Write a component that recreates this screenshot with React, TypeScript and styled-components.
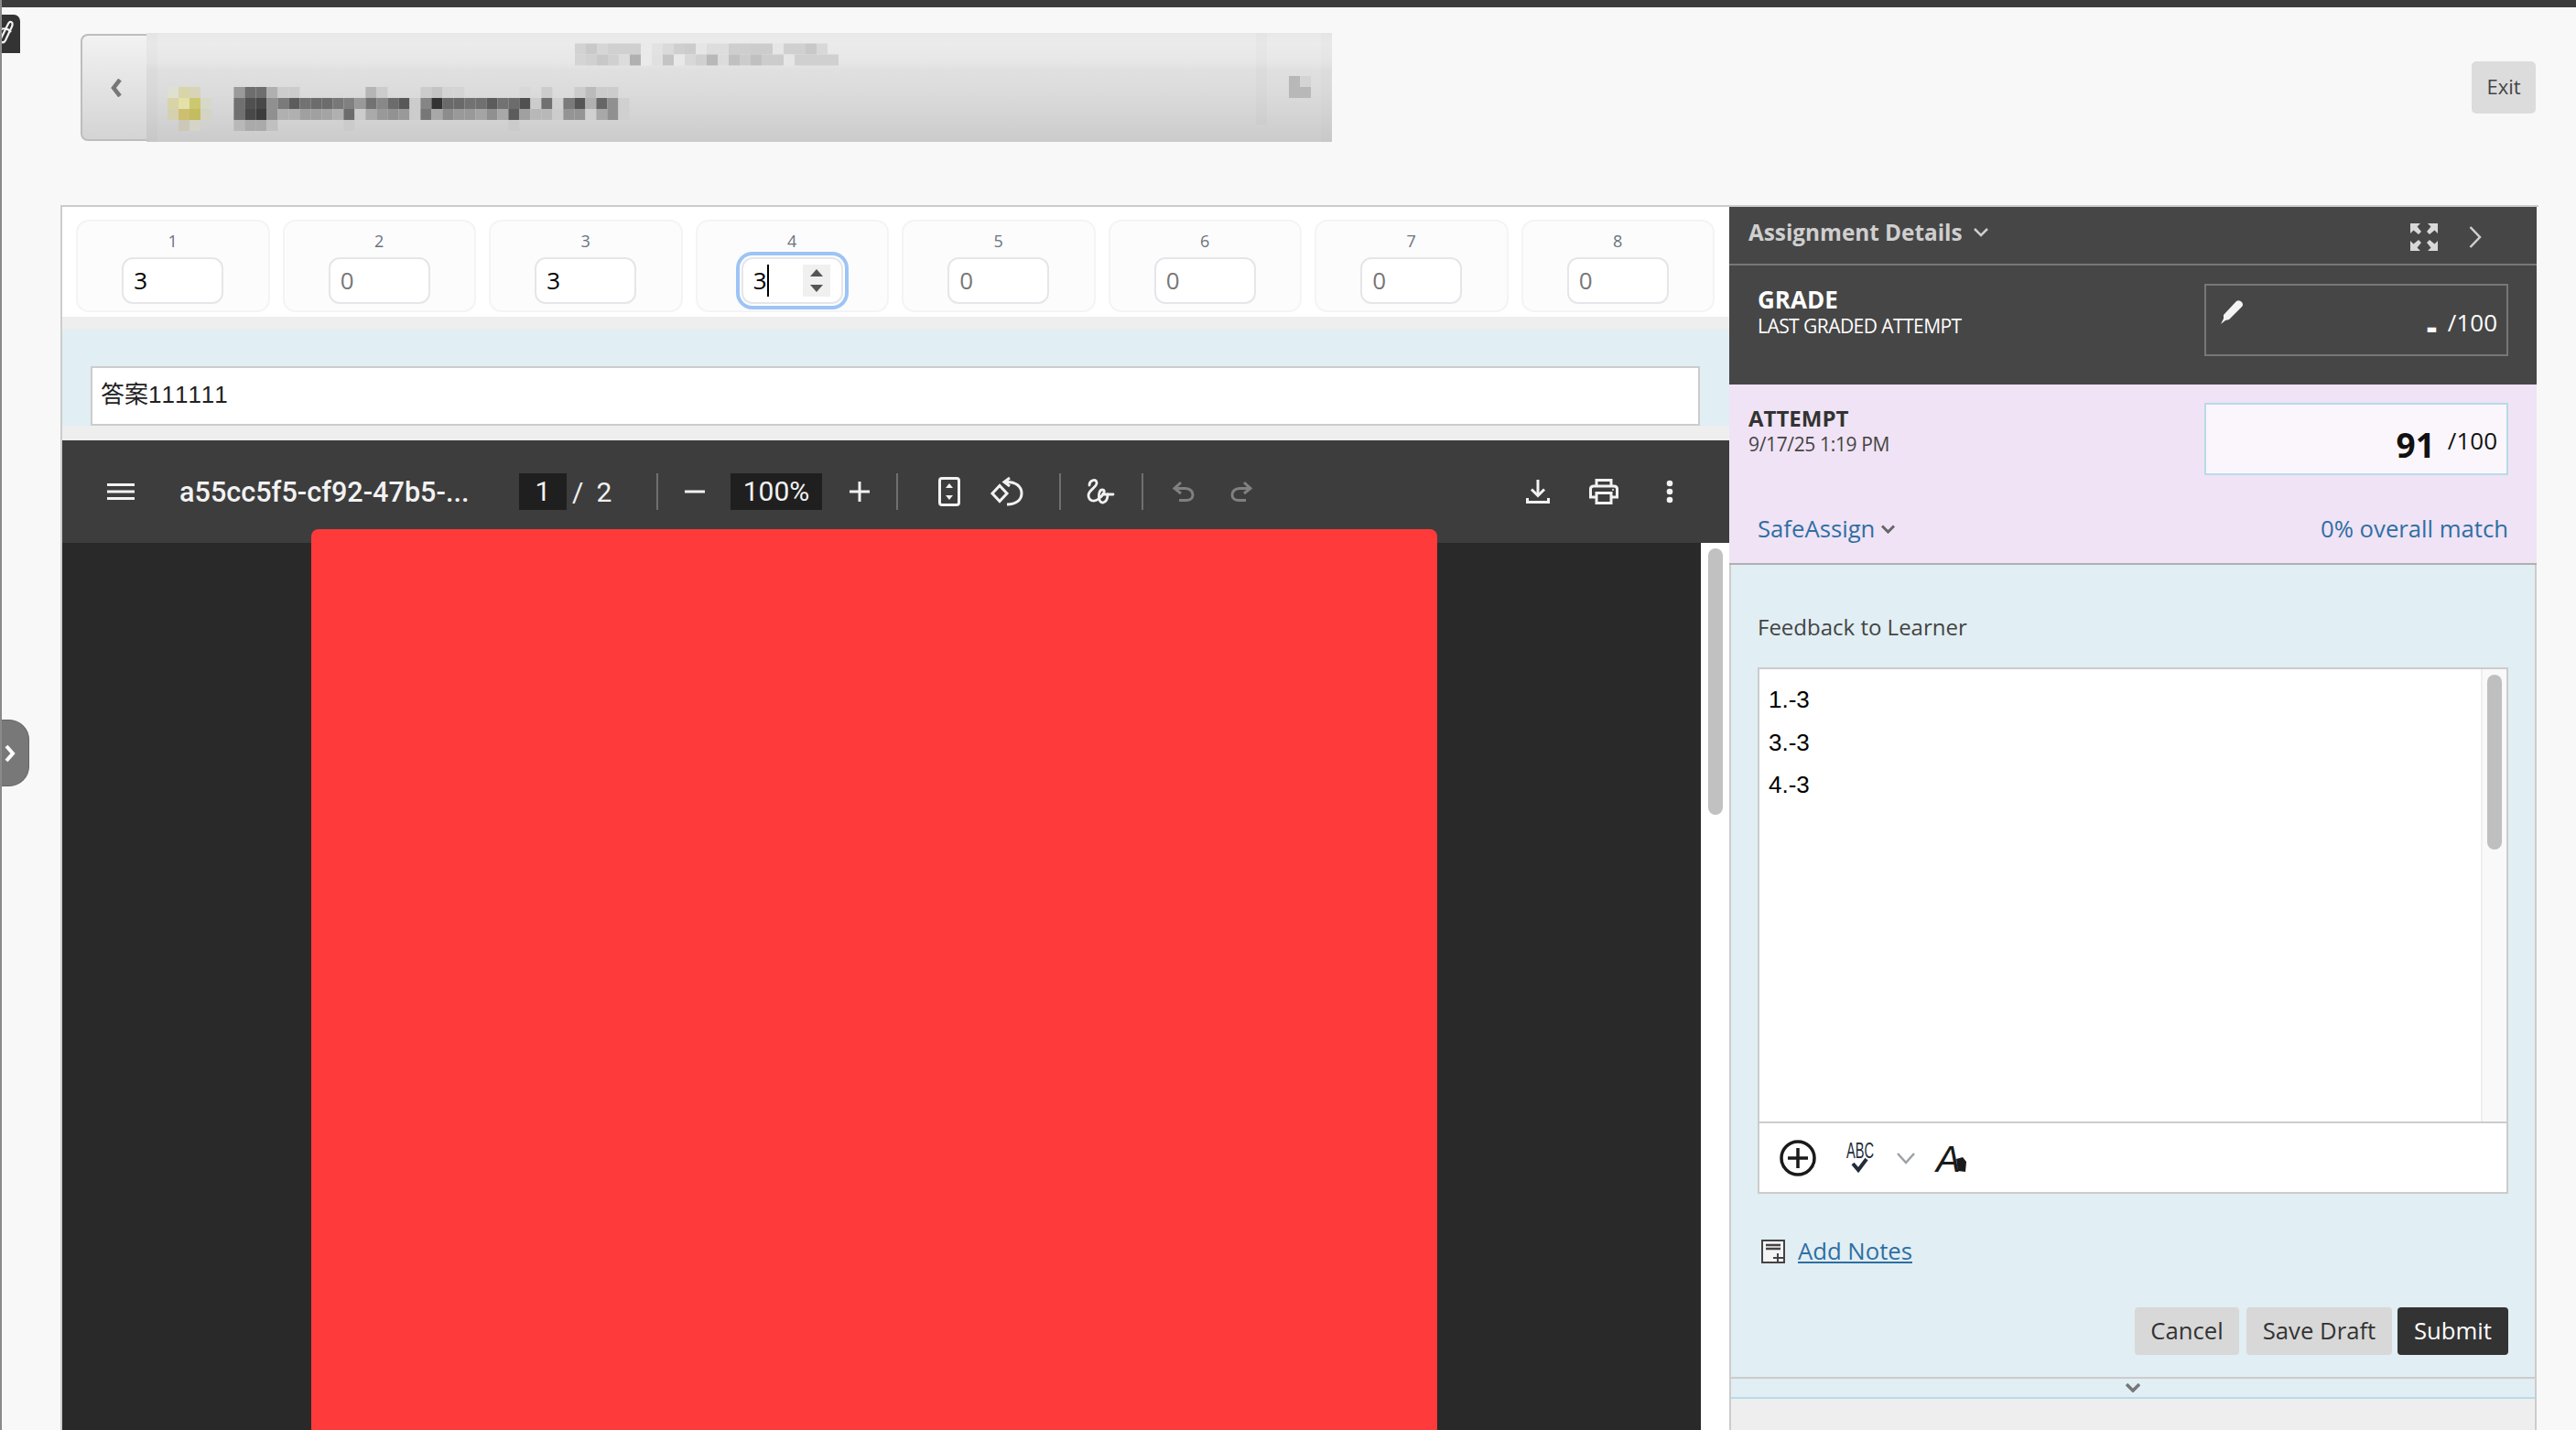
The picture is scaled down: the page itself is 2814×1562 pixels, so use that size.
import React from 'react';
import styled, { createGlobalStyle } from 'styled-components';

const GlobalStyle = createGlobalStyle`
  html, body { margin: 0; padding: 0; background: #f8f8f8; }
  body { font-family: "Open Sans", "Noto Sans", sans-serif; }
  * { box-sizing: border-box; }
`;

const Page = styled.div`
  position: relative;
  width: 2814px;
  height: 1562px;
  overflow: hidden;
  background: #f8f8f8;
  border-left: 2px solid #8a8a8a;
  display: flex;
  flex-direction: column;
`;
const TopBar = styled.div`
  height: 8px;
  margin-left: -2px;
  background: #3c3c3c;
  flex: none;
`;
const CornerTag = styled.div`
  position: absolute;
  left: -2px;
  top: 16px;
  width: 22px;
  height: 42px;
  background: #333;
  border-top-right-radius: 7px;
  padding-top: 6px;
  line-height: 0;
`;
const SideTab = styled.div`
  position: absolute;
  left: -2px;
  top: 786px;
  width: 32px;
  height: 73px;
  background: #787878;
  border: 1px solid #666;
  border-left: none;
  border-radius: 0 22px 22px 0;
  display: flex;
  align-items: center;
  padding-left: 5px;
`;
const HeaderRow = styled.header`
  height: 216px;
  flex: none;
  display: flex;
  align-items: flex-start;
  padding-left: 86px;
  padding-top: 28px;
`;
const BackButton = styled.div`
  width: 72px;
  height: 117px;
  margin-top: 1px;
  background: linear-gradient(#f2f2f2, #d4d4d4);
  border: 2px solid #bdbdbd;
  border-right: none;
  border-radius: 8px 0 0 8px;
  display: flex;
  align-items: center;
  justify-content: center;
  padding: 0 0 0 4px;
`;
const BlurBanner = styled.div`
  width: 1295px;
  height: 119px;
  background: linear-gradient(#e8e8e8 0, #ebebeb 12px, #e7e7e7 32px, #e0e0e0 40px, #dcdcdc 62px, #d4d4d4 90px, #cbcbcb 119px);
  line-height: 0;
`;
const ExitButton = styled.button`
  width: 70px;
  height: 57px;
  margin: 31px 44px 0 auto;
  border: none;
  border-radius: 5px;
  background: #dcdcdc;
  color: #444;
  font: 400 22px "Open Sans", sans-serif;
  padding: 0 0 3px;
`;
const Main = styled.main`
  flex: 1;
  display: flex;
  margin-left: 64px;
  min-height: 0;
  border-top: 2px solid #ccc;
  width: 2707px;
`;
const LeftColumn = styled.section`
  width: 1823px;
  flex: none;
  display: flex;
  flex-direction: column;
  background: #eee;
  border-left: 2px solid #ccc;
`;
const RubricStrip = styled.div`
  height: 120px;
  flex: none;
  background: #fff;
  padding: 14px 16px 0 15px;
  display: grid;
  grid-template-columns: repeat(8, 1fr);
  grid-template-rows: 101px;
  column-gap: 14px;
`;
const RubricCell = styled.div`
  background: #fcfcfc;
  border: 2px solid #f4f4f4;
  border-radius: 14px;
  display: flex;
  flex-direction: column;
  align-items: center;
  padding-top: 5px;
`;
const RubricLabel = styled.div`
  height: 32px;
  margin-bottom: 2px;
  line-height: 32px;
  font-size: 18px;
  color: #6b7280;
`;
const ScoreBox = styled.div<{ $focused?: boolean; $filled?: boolean }>`
  position: relative;
  width: 111px;
  height: 51px;
  background: #fff;
  border: 2px solid #e6e6ea;
  border-radius: 12px;
  padding-left: 11px;
  font-size: 26px;
  line-height: 47px;
  color: ${p => (p.$filled ? '#000' : '#777')};
  box-shadow: ${p => (p.$focused ? '0 0 0 2px #fff, 0 0 0 6px #9cc4f5' : 'none')};
`;
const Caret = styled.span`
  position: absolute;
  left: 26px;
  top: 6px;
  width: 2px;
  height: 35px;
  background: #000;
`;
const Spinner = styled.span`
  position: absolute;
  right: 12px;
  top: 6px;
  width: 30px;
  height: 35px;
  background: #f0f0f0;
  display: flex;
  flex-direction: column;
  align-items: center;
  justify-content: center;
  gap: 9px;
`;
const SpinUp = styled.i`
  width: 0;
  height: 0;
  border-left: 7px solid transparent;
  border-right: 7px solid transparent;
  border-bottom: 8px solid #555;
`;
const SpinDown = styled.i`
  width: 0;
  height: 0;
  border-left: 7px solid transparent;
  border-right: 7px solid transparent;
  border-top: 8px solid #555;
`;
const AnswerBand = styled.div`
  height: 105px;
  flex: none;
  margin-top: 14px;
  background: #e1eef3;
  padding: 40px 32px 0 31px;
`;
const AnswerInput = styled.div`
  height: 65px;
  background: #fff;
  border: 2px solid #ccc;
  padding-left: 9px;
  font: 400 26px/58px "Liberation Sans", "Noto Sans CJK SC", sans-serif;
  font-kerning: none;
  color: #222;
`;
const ViewerBar = styled.div`
  height: 112px;
  flex: none;
  margin-top: 16px;
  background: #3d3d3d;
  display: flex;
  align-items: center;
  padding-right: 61px;
  color: #f2f2f2;
  font-family: Roboto, "Liberation Sans", sans-serif;
  font-size: 30px;
`;
const ToolIcon = styled.svg<{ $ml: number }>`
  flex: none;
  margin-left: ${p => p.$ml}px;
  display: block;
  overflow: visible;
`;
const FileName = styled.div`
  width: 317px;
  margin-left: 49px;
  white-space: nowrap;
  font-size: 30.6px;
  font-weight: 500;
`;
const PageBox = styled.div`
  width: 52px;
  height: 40px;
  margin-left: 54px;
  background: #1f1f1f;
  text-align: center;
  line-height: 40px;
`;
const PageTotal = styled.div`
  width: 98px;
  padding-left: 6px;
  display: flex;
  gap: 14px;
`;
const BarSep = styled.div<{ $ml?: number }>`
  width: 2px;
  height: 40px;
  margin-left: ${p => p.$ml ?? 0}px;
  background: #6f6f6f;
  flex: none;
`;
const ZoomBox = styled.div`
  width: 100px;
  height: 40px;
  margin-left: 28px;
  background: #1f1f1f;
  text-align: center;
  line-height: 40px;
`;
const RightTools = styled.div`
  margin-left: auto;
  display: flex;
  align-items: center;
`;
const ViewerBody = styled.div`
  flex: 1;
  min-height: 0;
  display: flex;
  background: #292929;
`;
const PdfArea = styled.div`
  flex: 1;
  padding-left: 272px;
`;
const PdfPage = styled.div`
  width: 1230px;
  height: 1200px;
  margin-top: -15px;
  background: #ff3a3a;
  border-radius: 8px 8px 0 0;
`;
const ViewerTrack = styled.div`
  width: 31px;
  flex: none;
  background: #fff;
  padding: 6px 0 0 8px;
`;
const ViewerThumb = styled.div`
  width: 16px;
  height: 291px;
  border-radius: 8px;
  background: #c1c1c1;
`;
const Panel = styled.aside`
  width: 882px;
  flex: none;
  display: flex;
  flex-direction: column;
`;
const PanelHeader = styled.div`
  height: 64px;
  flex: none;
  background: #464646;
  border-bottom: 2px solid #777;
  display: flex;
  align-items: center;
  padding: 0 0 7px 21px;
  color: #cfcfcf;
  font-size: 24.3px;
  font-weight: 700;
`;
const PanelTitle = styled.span`
  margin-right: 12px;
`;
const HeaderTools = styled.div`
  margin-left: auto;
  padding-right: 60px;
  padding-top: 10px;
  display: flex;
  align-items: center;
  gap: 34px;
`;
const GradeSection = styled.div`
  height: 130px;
  flex: none;
  background: #464646;
  padding: 20px 31px 0 31px;
  display: flex;
  justify-content: space-between;
  color: #fff;
`;
const StackTitle = styled.div`
  font-size: 26px;
  font-weight: 700;
  line-height: 34px;
`;
const StackSub = styled.div`
  font-size: 21px;
  line-height: 24px;
  letter-spacing: -0.55px;
`;
const GradeBox = styled.div<{ $light?: boolean }>`
  width: 332px;
  height: 79px;
  border: 2px solid ${p => (p.$light ? '#b7dbe8' : '#777')};
  background: ${p => (p.$light ? '#fbf6fc' : 'transparent')};
  display: flex;
  align-items: center;
  justify-content: flex-end;
  padding-right: 10px;
  position: relative;
  color: ${p => (p.$light ? '#111' : '#fff')};
`;
const PencilSlot = styled.div`
  position: absolute;
  left: 16px;
  top: 16px;
  line-height: 0;
`;
const NoGrade = styled.span`
  font-size: 34px;
  font-weight: 800;
  line-height: 40px;
  margin-right: 12px;
  padding-top: 12px;
`;
const BigGrade = styled.span`
  font-size: 37px;
  font-weight: 700;
  line-height: 40px;
  margin-right: 14px;
  padding-top: 12px;
`;
const OutOf = styled.span<{ $drop?: number }>`
  font-size: 26px;
  line-height: 34px;
  padding-top: ${p => p.$drop ?? 0}px;
`;
const AttemptSection = styled.div`
  height: 197px;
  flex: none;
  background: #f0e3f5;
  border-bottom: 2px solid #b0b0b0;
  padding: 20px 31px 0 21px;
`;
const AttemptTop = styled.div`
  display: flex;
  justify-content: space-between;
  color: #333;
`;
const AttemptTitle = styled.div`
  font-size: 24px;
  font-weight: 700;
  line-height: 33px;
`;
const AttemptDate = styled.div`
  font-size: 21px;
  line-height: 24px;
  color: #444;
  letter-spacing: -0.35px;
`;
const SafeRow = styled.div`
  margin: 42px 0 0 10px;
  height: 34px;
  display: flex;
  align-items: center;
  justify-content: space-between;
  color: #2f6fa3;
  font-size: 25.7px;
  line-height: 34px;
`;
const SafeLink = styled.span`
  display: flex;
  align-items: center;
  gap: 7px;
`;
const LowerArea = styled.div`
  flex: 1;
  min-height: 0;
  background: #eee;
  display: flex;
  flex-direction: column;
  border-left: 2px solid #ccc;
  border-right: 2px solid #ccc;
`;
const FeedbackSection = styled.div`
  height: 887px;
  flex: none;
  background: #e1eef3;
  padding: 51px 29px 24px;
`;
const FeedbackLabel = styled.div`
  font-size: 24px;
  line-height: 34px;
  color: #444;
`;
const Editor = styled.div`
  margin-top: 27px;
  height: 575px;
  background: #fff;
  border: 2px solid #ccc;
  display: flex;
  flex-direction: column;
`;
const EditorBody = styled.div`
  height: 494px;
  flex: none;
  display: flex;
`;
const EditorText = styled.div`
  flex: 1;
  padding: 10px 0 0 10px;
  font: 400 26px/46.5px "Liberation Sans", Arial, sans-serif;
  color: #000;
`;
const EditorTrack = styled.div`
  width: 28px;
  flex: none;
  background: #f9f9f9;
  border-left: 2px solid #eee;
  padding: 6px 0 0 5px;
`;
const EditorThumb = styled.div`
  width: 16px;
  height: 191px;
  border-radius: 8px;
  background: #bfbfbf;
`;
const EditorTools = styled.div`
  flex: 1;
  border-top: 2px solid #ccc;
  display: flex;
  align-items: center;
`;
const NotesRow = styled.div`
  margin-top: 46px;
  height: 34px;
  display: flex;
  align-items: center;
`;
const NotesLink = styled.a`
  margin-left: 14px;
  color: #2f6fa3;
  font-size: 25.7px;
  line-height: 34px;
  text-decoration: underline;
`;
const ActionRow = styled.div`
  margin-top: 44px;
  height: 52px;
  display: flex;
  justify-content: flex-end;
`;
const ActionButton = styled.button<{ $w: number; $ml?: number; $primary?: boolean }>`
  width: ${p => p.$w}px;
  margin-left: ${p => p.$ml ?? 0}px;
  height: 52px;
  border: none;
  border-radius: 4px;
  padding: 0 0 2px;
  background: ${p => (p.$primary ? '#333' : '#d8d8d8')};
  color: ${p => (p.$primary ? '#fff' : '#333')};
  font: 400 25.7px "Open Sans", sans-serif;
`;
const CollapseStrip = styled.div`
  height: 24px;
  flex: none;
  background: #e1eef3;
  border-top: 2px solid #ccc;
  border-bottom: 2px solid #b7dbe8;
  display: flex;
  align-items: center;
  justify-content: center;
`;

const gray = (v: string) => `#${v}${v}${v}`;
const textRows: { y: number; x: number; cells: string }[] = [
  { y: 11.5, x: 468, cells: 'd2 c9 d6 d0 d0 d0 ea e2 da cf cc e6 dd dd ce ce cc cc e6 d0 d0 c8 d8' },
  { y: 23.5, x: 468, cells: 'd4 d0 c8 d0 dc b0 ea e0 c4 e8 d8 d0 b8 dc c0 cc c0 cc cc e6 d0 d0 d0 d0' },
  { y: 59, x: 95.4, cells: '9a 6e 6e b0 cc cc -- -- -- -- -- -- b5 cc -- -- -- cc c4 d4 d4 -- -- -- -- -- d8 -- cc -- -- cc bb cc cc' },
  { y: 71, x: 95.4, cells: '70 50 48 90 7a 5c 72 6c 6c 78 80 99 72 88 6c 58 cc 85 33 6a 6a 72 70 5c 72 6c 50 cc 70 d0 7a 55 b0 66 90 d0' },
  { y: 83, x: 95.4, cells: '70 48 3c 90 b0 b0 a0 a0 a4 b0 6c cc aa 99 92 99 cc 77 a8 8c 99 99 a4 90 a8 5c a0 b8 b8 cc 94 94 d0 a8 90 d0' },
  { y: 95, x: 95.4, cells: 'b8 aa aa c0 -- -- -- -- -- -- cb -- -- -- -- -- -- -- -- -- -- -- -- -- -- cb' },
  { y: 47, x: 1248, cells: 'b8 d4' },
  { y: 59, x: 1248, cells: 'b8 b8' },
];
const yellowCells: [number, number, string][] = [
  [23, 59, '#e0e0d2'], [35, 59, '#d8d5a8'], [47, 59, '#d8d4b8'],
  [23, 71, '#d8d4a8'], [35, 71, '#e4e0a8'], [47, 71, '#ccc870'], [59, 71, '#d8d8c8'],
  [23, 83, '#d4d0b0'], [35, 83, '#ccc070'], [47, 83, '#c4bc60'], [59, 83, '#d4d4c4'],
  [35, 95, '#ccc8b8'], [47, 95, '#d4d4c8'],
];

const BlurMosaic = () => (
  <svg width="1295" height="119" viewBox="0 0 1295 119">
    <rect x="0" y="0" width="12" height="119" fill="#000" opacity="0.015" />
    <rect x="1212" y="0" width="12" height="100" fill="#000" opacity="0.015" />
    <rect x="1283" y="0" width="12" height="119" fill="#000" opacity="0.012" />
    {textRows.flatMap(r =>
      r.cells.split(' ').map((c, i) =>
        c === '--' ? null : <rect key={`${r.y}-${r.x}-${i}`} x={r.x + i * 12} y={r.y} width="12" height="12" fill={gray(c)} />
      )
    )}
    {yellowCells.map(([x, y, f]) => (
      <rect key={`${x}-${y}`} x={x} y={y} width="12" height="12" fill={f} />
    ))}
  </svg>
);

const scores = ['3', '0', '3', '3', '0', '0', '0', '0'];
const W = '#f2f2f2';

export default function App() {
  return (
    <Page>
      <GlobalStyle />
      <TopBar />
      <CornerTag>
        <svg width="15" height="26" viewBox="0 0 15 26" fill="none" stroke="#f4f4f4" strokeWidth="2.2">
          <path d="M1 20 L9 4 C11 0 15 2 13 7 L6 22 C4 26 -1 24 1 20Z" />
          <path d="M0 11 C3 8 9 9 12 13" />
        </svg>
      </CornerTag>
      <SideTab>
        <svg width="12" height="20" viewBox="0 0 12 20" fill="none" stroke="#fff" strokeWidth="4">
          <path d="M2 2 L9 10 L2 18" />
        </svg>
      </SideTab>
      <HeaderRow>
        <BackButton>
          <svg width="15" height="20" viewBox="0 0 15 20" fill="none" stroke="#777" strokeWidth="4.5">
            <path d="M11 1 L4 10 L11 19" />
          </svg>
        </BackButton>
        <BlurBanner>
          <BlurMosaic />
        </BlurBanner>
        <ExitButton>Exit</ExitButton>
      </HeaderRow>
      <Main>
        <LeftColumn>
          <RubricStrip>
            {scores.map((s, i) => (
              <RubricCell key={i}>
                <RubricLabel>{i + 1}</RubricLabel>
                <ScoreBox $filled={s !== '0'} $focused={i === 3}>
                  {s}
                  {i === 3 && <Caret />}
                  {i === 3 && (
                    <Spinner>
                      <SpinUp />
                      <SpinDown />
                    </Spinner>
                  )}
                </ScoreBox>
              </RubricCell>
            ))}
          </RubricStrip>
          <AnswerBand>
            <AnswerInput>答案111111</AnswerInput>
          </AnswerBand>
          <ViewerBar>
            <ToolIcon $ml={49} width="30" height="18" viewBox="0 0 30 18" fill={W}>
              <rect y="0" width="30" height="3" />
              <rect y="7.5" width="30" height="3" />
              <rect y="15" width="30" height="3" />
            </ToolIcon>
            <FileName>a55cc5f5-cf92-47b5-...</FileName>
            <PageBox>1</PageBox>
            <PageTotal>
              <span>/</span>
              <span>2</span>
            </PageTotal>
            <BarSep />
            <ToolIcon $ml={29} width="22" height="4" viewBox="0 0 22 4" fill={W}>
              <rect width="22" height="3" y="0.5" />
            </ToolIcon>
            <ZoomBox>100%</ZoomBox>
            <ToolIcon $ml={30} width="22" height="22" viewBox="0 0 22 22" fill={W}>
              <rect y="9.5" width="22" height="3" />
              <rect x="9.5" width="3" height="22" />
            </ToolIcon>
            <BarSep $ml={29} />
            <ToolIcon $ml={44} width="24" height="32" viewBox="0 0 24 32">
              <rect x="1.5" y="1.5" width="21" height="29" rx="2.5" fill="none" stroke={W} strokeWidth="3" />
              <path d="M12 7 L16 12 H8 Z M12 25 L8 20 H16 Z" fill={W} />
            </ToolIcon>
            <ToolIcon $ml={33} width="36" height="32" viewBox="0 0 36 32" fill="none" stroke={W} strokeWidth="3">
              <path d="M2 18 L10 9.5 L18 18 L10 26.5 Z" />
              <path d="M17 5.5 C27 5 34 10 34 18 C34 25 28 30 18 30" />
              <path d="M21 1 L15 5.5 L21 10" />
            </ToolIcon>
            <BarSep $ml={39} />
            <ToolIcon $ml={28} width="30" height="28" viewBox="0 0 30 28" fill="none" stroke={W} strokeWidth="2.8" strokeLinecap="round">
              <path d="M3 7 C3 2 10 -1 11 4 C12 9 2 12 2 18 C2 24 8 26 13 22 C18 18 22 12 17 12 C12 12 12 27 18 26 C22 25 23 20 23 17" />
              <path d="M18 17 H29" />
            </ToolIcon>
            <BarSep $ml={30} />
            <ToolIcon $ml={31} width="25" height="22" viewBox="0 0 25 22" fill="none" stroke="#808080" strokeWidth="3">
              <path d="M10 1 L3 7.5 L10 13" />
              <path d="M3 7.5 H15 C20 7.5 23 11 23 14.5 C23 18 20 20.5 16 20.5 H8" />
            </ToolIcon>
            <ToolIcon $ml={39} width="25" height="22" viewBox="0 0 25 22" fill="none" stroke="#808080" strokeWidth="3">
              <path d="M15 1 L22 7.5 L15 13" />
              <path d="M22 7.5 H10 C5 7.5 2 11 2 14.5 C2 18 5 20.5 9 20.5 H17" />
            </ToolIcon>
            <RightTools>
              <ToolIcon $ml={0} width="26" height="26" viewBox="0 0 26 26" fill="none" stroke={W} strokeWidth="3">
                <path d="M13 0 V17" />
                <path d="M6 10.5 L13 17.5 L20 10.5" />
                <path d="M1.5 20 V24.5 H24.5 V20" />
              </ToolIcon>
              <ToolIcon $ml={43} width="32" height="28" viewBox="0 0 32 28" fill="none" stroke={W} strokeWidth="3">
                <path d="M8 8 V1.5 H24 V8" />
                <path d="M7 20 H1.5 V11 C1.5 9 3 8 5 8 H27 C29 8 30.5 9 30.5 11 V20 H25" />
                <rect x="8" y="15.5" width="16" height="11" />
                <circle cx="26" cy="12" r="1" fill={W} stroke="none" />
              </ToolIcon>
              <ToolIcon $ml={52} width="8" height="26" viewBox="0 0 8 26" fill={W}>
                <circle cx="4" cy="4" r="3.3" />
                <circle cx="4" cy="13" r="3.3" />
                <circle cx="4" cy="22" r="3.3" />
              </ToolIcon>
            </RightTools>
          </ViewerBar>
          <ViewerBody>
            <PdfArea>
              <PdfPage />
            </PdfArea>
            <ViewerTrack>
              <ViewerThumb />
            </ViewerTrack>
          </ViewerBody>
        </LeftColumn>
        <Panel>
          <PanelHeader>
            <PanelTitle>Assignment Details</PanelTitle>
            <svg width="16" height="10" viewBox="0 0 16 10" fill="none" stroke="#cfcfcf" strokeWidth="2.5">
              <path d="M1 1 L8 8 L15 1" />
            </svg>
            <HeaderTools>
              <svg width="30" height="30" viewBox="0 0 30 30" fill="#d8d8d8">
                <path d="M0 0 H11 L7.5 3.5 L12 9 L9 12 L3.5 7.5 L0 11 Z" />
                <path d="M30 0 H19 L22.5 3.5 L18 9 L21 12 L26.5 7.5 L30 11 Z" />
                <path d="M0 30 H11 L7.5 26.5 L12 21 L9 18 L3.5 22.5 L0 19 Z" />
                <path d="M30 30 H19 L22.5 26.5 L18 21 L21 18 L26.5 22.5 L30 19 Z" />
              </svg>
              <svg width="14" height="24" viewBox="0 0 14 24" fill="none" stroke="#cfcfcf" strokeWidth="2.5">
                <path d="M1.5 1 L12 12 L1.5 23" />
              </svg>
            </HeaderTools>
          </PanelHeader>
          <GradeSection>
            <div>
              <StackTitle>GRADE</StackTitle>
              <StackSub>LAST GRADED ATTEMPT</StackSub>
            </div>
            <GradeBox>
              <PencilSlot>
                <svg width="26" height="26" viewBox="0 0 26 26" fill="#f4f4f4">
                  <path d="M0 26 L3 20 L3 16 L17 1 Q20 -1 23 2 Q25 5 23 7 L9 21 L5 22 Z" />
                </svg>
              </PencilSlot>
              <NoGrade>-</NoGrade>
              <OutOf $drop={4}>/100</OutOf>
            </GradeBox>
          </GradeSection>
          <AttemptSection>
            <AttemptTop>
              <div>
                <AttemptTitle>ATTEMPT</AttemptTitle>
                <AttemptDate>9/17/25 1:19 PM</AttemptDate>
              </div>
              <GradeBox $light>
                <BigGrade>91</BigGrade>
                <OutOf $drop={2}>/100</OutOf>
              </GradeBox>
            </AttemptTop>
            <SafeRow>
              <SafeLink>
                SafeAssign
                <svg width="15" height="10" viewBox="0 0 15 10" fill="none" stroke="#666" strokeWidth="3">
                  <path d="M1 1.5 L7.5 8 L14 1.5" />
                </svg>
              </SafeLink>
              <span>0% overall match</span>
            </SafeRow>
          </AttemptSection>
          <LowerArea>
            <FeedbackSection>
              <FeedbackLabel>Feedback to Learner</FeedbackLabel>
              <Editor>
                <EditorBody>
                  <EditorText>
                    1.-3
                    <br />
                    3.-3
                    <br />
                    4.-3
                  </EditorText>
                  <EditorTrack>
                    <EditorThumb />
                  </EditorTrack>
                </EditorBody>
                <EditorTools>
                  <ToolIcon $ml={22} width="40" height="40" viewBox="0 0 40 40" fill="none" stroke="#1a1a1a" strokeWidth="3.5">
                    <circle cx="20" cy="20" r="18" />
                    <path d="M20 9 V31 M9 20 H31" />
                  </ToolIcon>
                  <ToolIcon $ml={33} width="30" height="33" viewBox="0 0 30 33">
                    <text x="0" y="17" fontFamily="Liberation Sans" fontSize="23" textLength="30" lengthAdjust="spacingAndGlyphs" fill="#222c3a">ABC</text>
                    <path d="M7 23 L13 30 L22 18" fill="none" stroke="#222c3a" strokeWidth="4" />
                  </ToolIcon>
                  <ToolIcon $ml={25} width="20" height="12" viewBox="0 0 20 12" fill="none" stroke="#9aa0a6" strokeWidth="2.5">
                    <path d="M1 1 L10 11 L19 1" />
                  </ToolIcon>
                  <ToolIcon $ml={25} width="31" height="30" viewBox="0 0 31 30">
                    <text x="-2" y="30" fontFamily="Liberation Sans" fontSize="40" fontStyle="italic" fill="#1a1a1a">A</text>
                    <path d="M20 16 L27 14 L31 19 L30 30 L22 29 Z" fill="#1a1a1a" />
                  </ToolIcon>
                </EditorTools>
              </Editor>
              <NotesRow>
                <ToolIcon $ml={4} width="26" height="26" viewBox="0 0 26 26" fill="none" stroke="#444" strokeWidth="2">
                  <rect x="1" y="1" width="24" height="24" fill="#f4f4f4" />
                  <path d="M5 6 H21 M5 10 H21" strokeWidth="2.5" />
                  <path d="M18 15 V25 M13 20 H25" />
                </ToolIcon>
                <NotesLink>Add Notes</NotesLink>
              </NotesRow>
              <ActionRow>
                <ActionButton $w={114}>Cancel</ActionButton>
                <ActionButton $w={159} $ml={8}>Save Draft</ActionButton>
                <ActionButton $w={121} $ml={6} $primary>Submit</ActionButton>
              </ActionRow>
            </FeedbackSection>
            <CollapseStrip>
              <svg width="16" height="10" viewBox="0 0 16 10" fill="none" stroke="#777" strokeWidth="3.5">
                <path d="M1 1 L8 8 L15 1" />
              </svg>
            </CollapseStrip>
          </LowerArea>
        </Panel>
      </Main>
    </Page>
  );
}
